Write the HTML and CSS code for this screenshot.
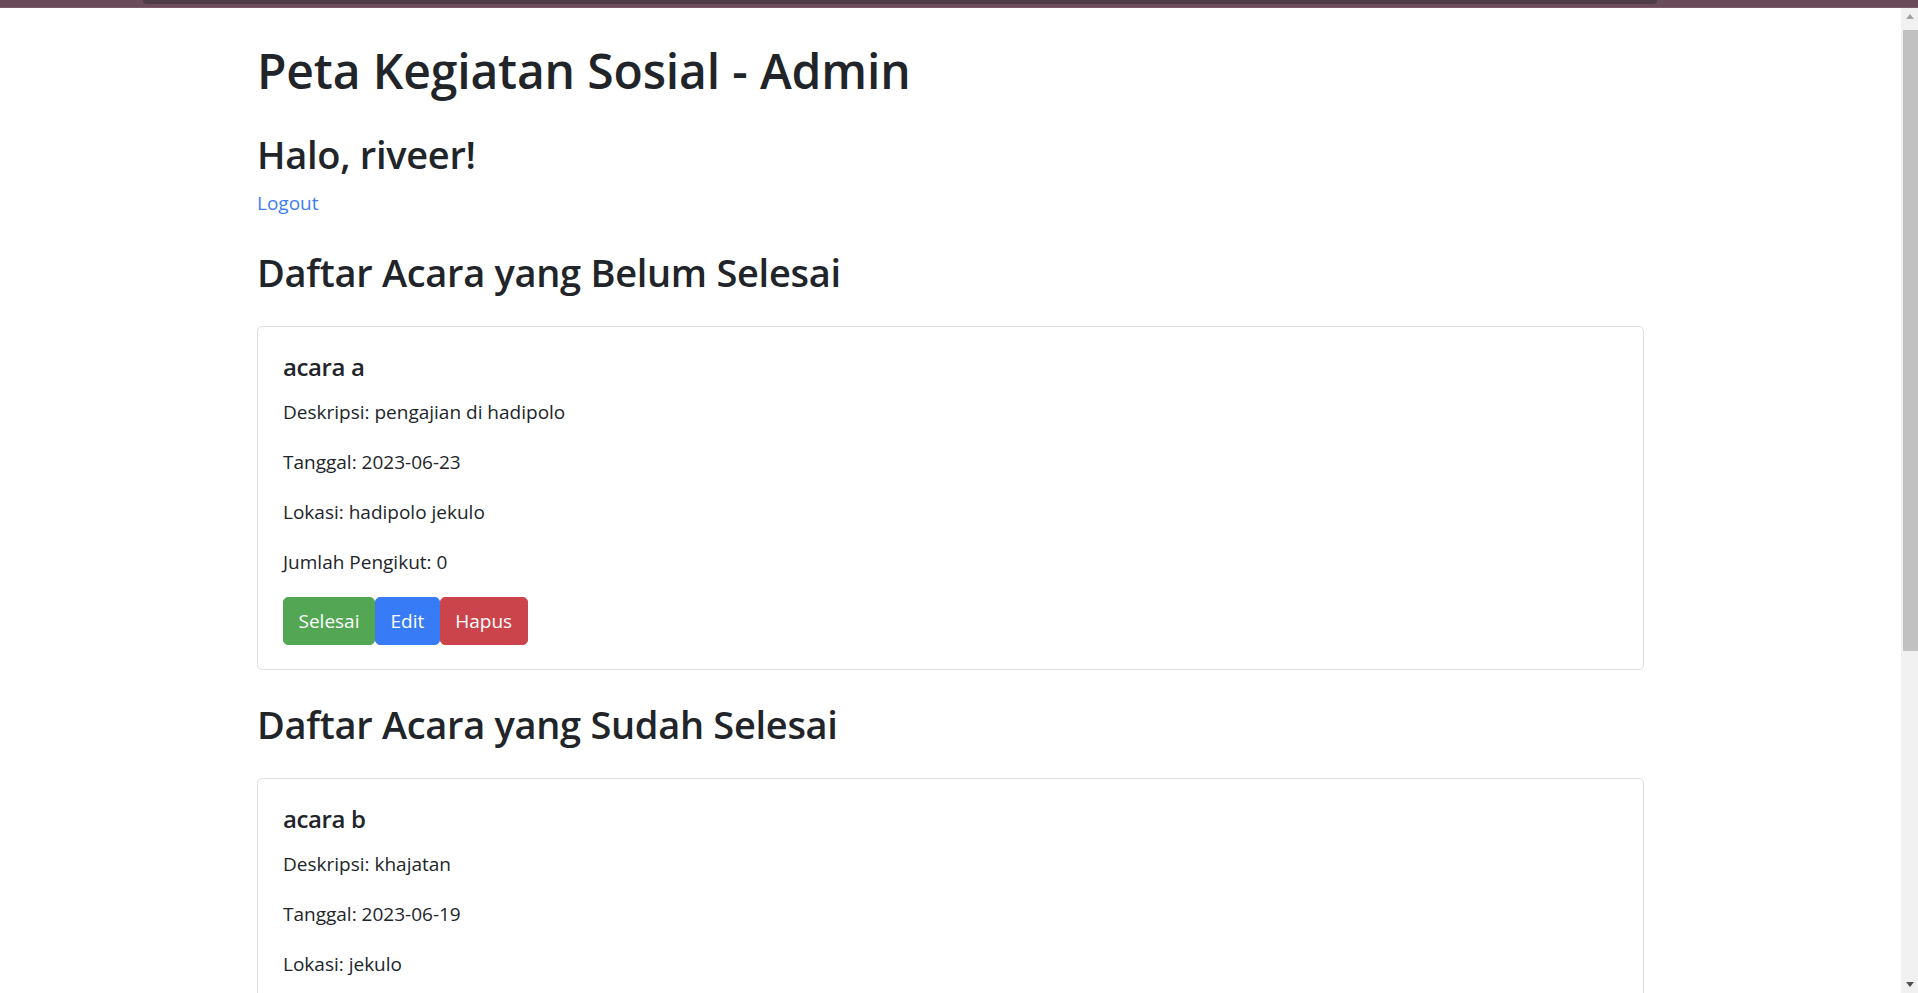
FILE: index.html
```html
<!DOCTYPE html>
<html lang="id">
<head>
<meta charset="utf-8">
<title>Peta Kegiatan Sosial - Admin</title>
<link rel="stylesheet" href="styles.css">
</head>
<body>
<div class="chrome"><div class="chrome-tab"></div></div>
<div class="window">
  <main class="viewport">
    <div class="container">
      <h1 class="page-title">Peta Kegiatan Sosial - Admin</h1>
      <h2 class="greeting">Halo, riveer!</h2>
      <a class="logout" href="#">Logout</a>

      <h2 class="section-title">Daftar Acara yang Belum Selesai</h2>
      <div class="card">
        <div class="card-body">
          <h5 class="card-title">acara a</h5>
          <p class="card-text">Deskripsi: pengajian di hadipolo</p>
          <p class="card-text">Tanggal: 2023-06-23</p>
          <p class="card-text">Lokasi: hadipolo jekulo</p>
          <p class="card-text">Jumlah Pengikut: 0</p>
          <div class="actions">
            <button class="btn btn-success">Selesai</button><button class="btn btn-primary">Edit</button><button class="btn btn-danger">Hapus</button>
          </div>
        </div>
      </div>

      <h2 class="section-title">Daftar Acara yang Sudah Selesai</h2>
      <div class="card">
        <div class="card-body">
          <h5 class="card-title">acara b</h5>
          <p class="card-text">Deskripsi: khajatan</p>
          <p class="card-text">Tanggal: 2023-06-19</p>
          <p class="card-text">Lokasi: jekulo</p>
        </div>
      </div>
    </div>
  </main>
  <div class="scrollbar">
    <div class="sb-arrow sb-up"></div>
    <div class="sb-track"><div class="sb-thumb"></div></div>
    <div class="sb-arrow sb-down"></div>
  </div>
</div>
</body>
</html>
```
FILE: styles.css
```css
* { box-sizing: border-box; }
html, body { margin: 0; padding: 0; height: 100%; overflow: hidden; }
body {
  display: flex;
  flex-direction: column;
  background: #fff;
  color: #212529;
  font-family: "Open Sans", "Noto Sans", sans-serif;
  font-size: 19px;
  line-height: 30px;
}

/* browser chrome strip */
.chrome {
  height: 8px;
  flex: 0 0 8px;
  background: #6b4c5a;
  border-bottom: 1px solid #7a5a69;
  padding: 0 261px 0 143px;
}
.chrome-tab {
  height: 4px;
  background: #4e3c47;
  border-radius: 0 0 6px 6px;
}

.window { flex: 1; display: flex; min-height: 0; }
.viewport { flex: 1; overflow: hidden; }

.container {
  width: 1425px;
  margin: 0 auto;
  padding: 33px 19px 0;
}

h1, h2, h5 { margin: 0; font-weight: 600; }
.page-title { font-size: 48px; line-height: 60px; margin-bottom: 29px; letter-spacing: -0.15px; }
.greeting { font-size: 38px; line-height: 48px; margin-bottom: 10px; letter-spacing: -0.3px; }
.logout { display: block; color: #3f7ef3; text-decoration: none; width: max-content; }
.section-title { font-size: 38px; line-height: 48px; margin: 30px 0 30px; letter-spacing: -0.3px; }

.card {
  border: 1px solid #dfdfdf;
  border-radius: 5px;
  background: #fff;
}
.card-body { padding: 25px 25px 24px; }
.card-title { font-size: 24px; line-height: 30px; font-weight: 600; margin-bottom: 15px; letter-spacing: -0.4px; }
.card-text { margin: 0 0 20px; }

.actions { display: flex; }
.btn {
  font-family: inherit;
  font-size: 19px;
  line-height: 30px;
  padding: 8px 14.5px;
  border: 1px solid transparent;
  border-radius: 5px;
  color: #fff;
  cursor: pointer;
}
.btn-success { background: #53a653; border-color: #53a653; }
.btn-primary { background: #377cf6; border-color: #377cf6; }
.btn-danger { background: #cb444b; border-color: #cb444b; }

/* scrollbar */
.scrollbar {
  width: 17px;
  flex: 0 0 17px;
  background: #f1f1f1;
  display: flex;
  flex-direction: column;
  align-items: stretch;
}
.sb-arrow { height: 17px; flex: 0 0 17px; display: flex; align-items: center; justify-content: center; }
.sb-up::before {
  content: "";
  border-left: 4.5px solid transparent;
  border-right: 4.5px solid transparent;
  border-bottom: 5px solid #a3a3a3;
}
.sb-down::before {
  content: "";
  border-left: 4.5px solid transparent;
  border-right: 4.5px solid transparent;
  border-top: 5px solid #505050;
}
.sb-track { flex: 1; padding: 5px 0 0 2px; }
.sb-thumb { height: 621px; background: #c1c1c1; }
```
